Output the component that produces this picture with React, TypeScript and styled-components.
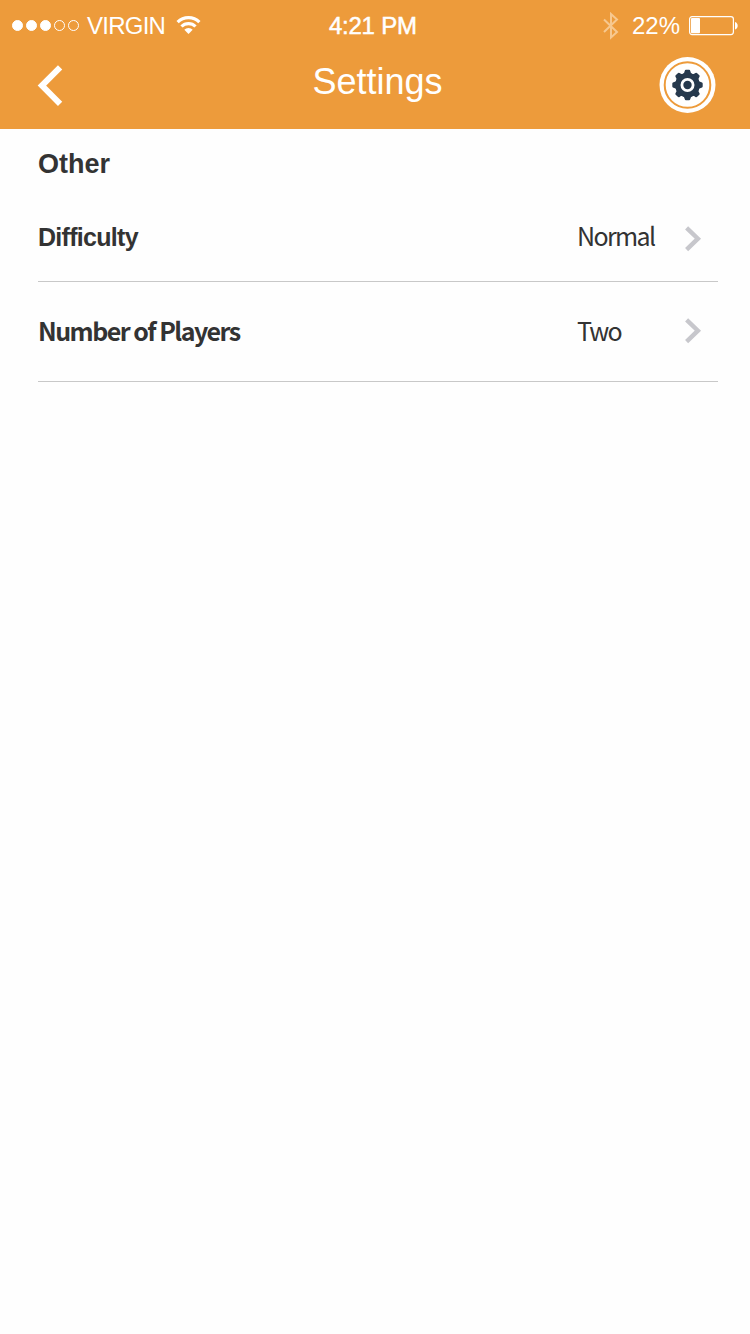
import React from 'react';
import styled, { createGlobalStyle } from 'styled-components';

const GlobalStyle = createGlobalStyle`
  * { box-sizing: border-box; }
  body { margin: 0; background: #fefefe; }
  svg { display: block; }
`;

const helvetica = `'Liberation Sans', Arial, sans-serif`;
const humanist = `'Noto Sans CJK SC', 'Noto Sans', sans-serif`;

const Screen = styled.div`
  width: 750px;
  min-height: 1334px;
  background: #fefefe;
  font-family: ${helvetica};
  color: #333;
`;

const Header = styled.header`
  height: 129px;
  background: #ed9b3b;
  color: #fff;
`;

const StatusBar = styled.div`
  display: grid;
  grid-template-columns: 317px auto 1fr;
  align-items: center;
  height: 52px;
  padding: 0 12px 0 12px;
`;

const StatusGroup = styled.div<{ $end?: boolean }>`
  display: flex;
  align-items: center;
  justify-content: ${(p) => (p.$end ? 'flex-end' : 'flex-start')};
`;

const Signal = styled.div`
  display: flex;
  gap: 3px;
  margin: 0 8px 1px 0;
`;

const Dot = styled.span<{ $on: boolean }>`
  width: 11px;
  height: 11px;
  border-radius: 50%;
  border: 1px solid #fff;
  background: ${(p) => (p.$on ? '#fff' : 'transparent')};
`;

const StatusText = styled.span<{ $spacing: number; $strong?: boolean }>`
  font-size: 24px;
  line-height: 28px;
  letter-spacing: ${(p) => p.$spacing}px;
  white-space: nowrap;
  -webkit-text-stroke: ${(p) => (p.$strong ? '0.5px #fff' : '0')};
`;

const WifiIcon = styled.svg`
  margin: 0 0 2px 11px;
`;

const BluetoothIcon = styled.svg`
  margin-right: 13px;
`;

const BatteryIcon = styled.svg`
  margin-left: 9px;
`;

const NavBar = styled.div`
  display: grid;
  grid-template-columns: 1fr auto 1fr;
  height: 77px;
  padding: 0 34px 0 37px;
`;

const NavButton = styled.button<{ $end?: boolean; $top: number }>`
  justify-self: ${(p) => (p.$end ? 'end' : 'start')};
  align-self: start;
  margin: ${(p) => p.$top}px 0 0;
  padding: 0;
  border: 0;
  background: none;
`;

const Title = styled.h1`
  margin: 10px 0 0;
  padding-left: 2px;
  font-size: 36px;
  line-height: 40px;
  font-weight: 400;
  letter-spacing: 0;
`;

const Content = styled.main`
  padding: 17px 32px 0 38px;
`;

const SectionTitle = styled.h2`
  margin: 0;
  font-size: 27px;
  line-height: 36px;
  font-weight: 700;
  letter-spacing: 0;
`;

const Row = styled.div<{ $top: number }>`
  display: flex;
  align-items: flex-start;
  height: 100px;
  padding-top: ${(p) => p.$top}px;
  border-bottom: 1px solid #c8c8c8;
`;

const RowLabel = styled.span<{ $humanist?: boolean; $spacing: number }>`
  width: 539px;
  font-family: ${(p) => (p.$humanist ? humanist : helvetica)};
  font-size: 25px;
  line-height: ${(p) => (p.$humanist ? 30 : 34)}px;
  font-weight: 700;
  letter-spacing: ${(p) => p.$spacing}px;
  white-space: nowrap;
`;

const RowValue = styled.span<{ $spacing: number }>`
  width: 107px;
  font-family: ${humanist};
  font-size: 25px;
  line-height: 30px;
  letter-spacing: ${(p) => p.$spacing}px;
`;

const ChevronIcon = styled.svg<{ $top: number }>`
  margin-top: ${(p) => p.$top}px;
`;

const Chevron = ({ top }: { top: number }) => (
  <ChevronIcon $top={top} width="18" height="26" viewBox="0 0 18 26">
    <path d="M2.6 1.8 L13.9 12.7 L2.6 23.6" fill="none" stroke="#c7c7cc" strokeWidth="4.4" />
  </ChevronIcon>
);

const teeth = [0, 45, 90, 135, 180, 225, 270, 315];

export default function App() {
  return (
    <>
      <GlobalStyle />
      <Screen>
        <Header>
          <StatusBar>
            <StatusGroup>
              <Signal>
                {[true, true, true, false, false].map((on, i) => (
                  <Dot key={i} $on={on} />
                ))}
              </Signal>
              <StatusText $spacing={-0.75}>VIRGIN</StatusText>
              <WifiIcon width="25" height="20" viewBox="0 0 25 20">
                <g fill="none" stroke="#fff" strokeWidth="3.2">
                  <path d="M1.6 7.2 A15.5 15.5 0 0 1 23.4 7.2" />
                  <path d="M5.5 11.5 A9.8 9.8 0 0 1 19.5 11.5" />
                </g>
                <path d="M8.3 14.8 A5.8 5.8 0 0 1 16.7 14.8 L12.5 19 Z" fill="#fff" />
              </WifiIcon>
            </StatusGroup>
            <StatusText $spacing={-0.25} $strong>4:21 PM</StatusText>
            <StatusGroup $end>
              <BluetoothIcon width="16" height="28" viewBox="0 0 16 28">
                <path
                  d="M1 7.5 L14 20 L8 25.5 V2 L14 7.5 L1 20"
                  fill="none"
                  stroke="#f7c88f"
                  strokeWidth="2"
                />
              </BluetoothIcon>
              <StatusText $spacing={0}>22%</StatusText>
              <BatteryIcon width="49" height="20" viewBox="0 0 49 20">
                <rect x="0.6" y="0.6" width="43.8" height="18" rx="2.5" fill="none" stroke="#fff" strokeWidth="1.2" />
                <rect x="2" y="2" width="9" height="15.2" rx="1" fill="#fff" />
                <path d="M46 6 C49.6 7 49.6 12.4 46 13.4 Z" fill="#fff" />
              </BatteryIcon>
            </StatusGroup>
          </StatusBar>
          <NavBar>
            <NavButton $top={13} aria-label="Back">
              <svg width="26" height="42" viewBox="0 0 26 42">
                <path d="M23.1 2.3 L4.9 20.6 L23.1 38.9" fill="none" stroke="#fff" strokeWidth="6" strokeLinejoin="miter" />
              </svg>
            </NavButton>
            <Title>Settings</Title>
            <NavButton $end $top={5} aria-label="Preferences">
              <svg width="57" height="56" viewBox="0 0 57 56">
                <circle cx="28.5" cy="28" r="28" fill="#fff" />
                <circle cx="28.5" cy="28" r="22.8" fill="none" stroke="#ed9b3b" strokeWidth="2" />
                <g fill="#26394d">
                  <circle cx="28.5" cy="28" r="12.3" />
                  {teeth.map((a) => (
                    <path
                      key={a}
                      d="M23.3 17.5 Q25.5 16.5 25.7 14 Q25.9 12.8 27 12.8 H30 Q31.1 12.8 31.3 14 Q31.5 16.5 33.7 17.5 Z"
                      transform={`rotate(${a} 28.5 28)`}
                    />
                  ))}
                </g>
                <circle cx="28.5" cy="28" r="5.6" fill="none" stroke="#fff" strokeWidth="2.8" />
              </svg>
            </NavButton>
          </NavBar>
        </Header>
        <Content>
          <SectionTitle>Other</SectionTitle>
          <Row $top={38}>
            <RowLabel $spacing={-0.7}>Difficulty</RowLabel>
            <RowValue $spacing={-1.65}>Normal</RowValue>
            <Chevron top={6} />
          </Row>
          <Row $top={33}>
            <RowLabel $humanist $spacing={-1.53}>Number of Players</RowLabel>
            <RowValue $spacing={-1.7}>Two</RowValue>
            <Chevron top={3} />
          </Row>
        </Content>
      </Screen>
    </>
  );
}
